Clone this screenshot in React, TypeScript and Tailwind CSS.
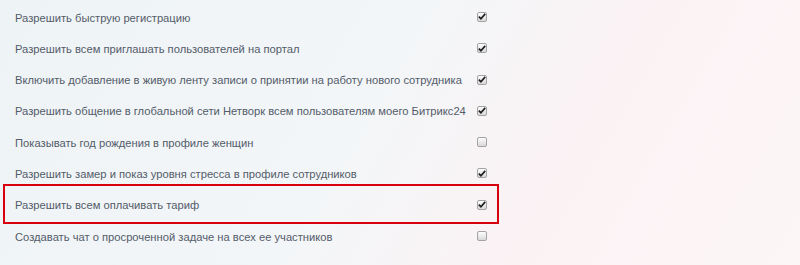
import React from "react";

type Option = { label: string; checked: boolean; highlight?: boolean };

const options: Option[] = [
  { label: "Разрешить быструю регистрацию", checked: true },
  { label: "Разрешить всем приглашать пользователей на портал", checked: true },
  {
    label: "Включить добавление в живую ленту записи о принятии на работу нового сотрудника",
    checked: true,
  },
  {
    label: "Разрешить общение в глобальной сети Нетворк всем пользователям моего Битрикс24",
    checked: true,
  },
  { label: "Показывать год рождения в профиле женщин", checked: false },
  { label: "Разрешить замер и показ уровня стресса в профиле сотрудников", checked: true },
  { label: "Разрешить всем оплачивать тариф", checked: true, highlight: true },
  { label: "Создавать чат о просроченной задаче на всех ее участников", checked: false },
];

function Checkbox({ checked }: { checked: boolean }) {
  return (
    <span className="-mt-[2px] flex h-[10px] w-[10px] items-center justify-center rounded-[2px] border border-[#a3a3a3] bg-gradient-to-b from-[#fdfdfd] to-[#d9d9d9]">
      {checked && (
        <svg width="8" height="7" viewBox="0 0 8 7" className="block">
          <path d="M0.8 3.6 L2.9 5.7 L7.2 0.9" fill="none" stroke="#1f1f1f" strokeWidth="1.7" />
        </svg>
      )}
    </span>
  );
}

export default function App() {
  return (
    <div className="h-[265px] w-[800px] overflow-hidden bg-[linear-gradient(120deg,#eef3f6_0%,#f3f6f8_45%,#fbf2f4_70%,#fcf6f7_100%)] pt-[2.3px] font-['Liberation_Sans',Arial,sans-serif] text-[11.2px] text-[#535c69]">
      {options.map((o) => (
        <div key={o.label} className="relative flex h-[31.3px] items-center pl-[15px]">
          {o.highlight && (
            <span className="pointer-events-none absolute -top-[6px] -bottom-[3px] left-[3px] w-[496px] border-2 border-[#d9000d]" />
          )}
          <span className="w-[462px] whitespace-nowrap">{o.label}</span>
          <Checkbox checked={o.checked} />
        </div>
      ))}
    </div>
  );
}
